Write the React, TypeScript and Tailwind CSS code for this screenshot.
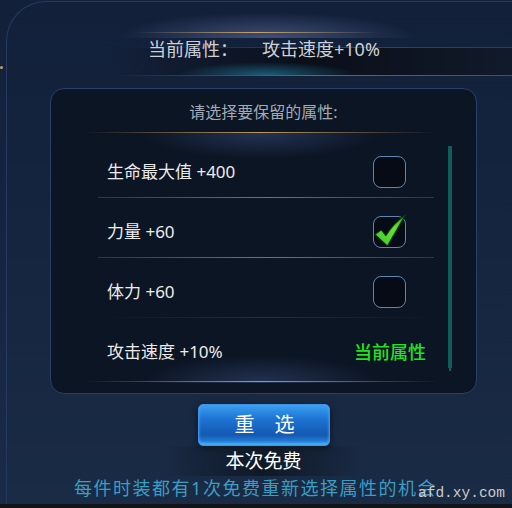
import React from 'react';

const rows = [
  { label: '生命最大值 +400', state: 'empty', line: 'gold' },
  { label: '力量 +60', state: 'checked', line: 'gold' },
  { label: '体力 +60', state: 'empty', line: 'grey' },
  { label: '攻击速度 +10%', state: 'current', line: 'none' },
];

const CheckBox: React.FC<{ checked?: boolean }> = ({ checked }) => (
  <div className="relative w-[33px] h-[32px] rounded-[8px] border-[1.5px] border-[#5d87b0] bg-[#060b15]">
    {checked && (
      <svg className="absolute -left-[1px] -top-[3px]" width="35" height="35" viewBox="0 0 34 34">
        <defs>
          <linearGradient id="chk" x1="0" y1="1" x2="1" y2="0">
            <stop offset="0" stopColor="#3fc52a" />
            <stop offset="0.6" stopColor="#66e034" />
            <stop offset="1" stopColor="#1fa81a" />
          </linearGradient>
        </defs>
        <path
          d="M2 20 L8 15.5 L12.5 21 Q20 9 31.5 1 Q25 12 14 31 Z"
          fill="url(#chk)"
          stroke="#0c3a0c"
          strokeWidth="1"
          strokeLinejoin="round"
        />
      </svg>
    )}
  </div>
);

export default function App() {
  return (
    <div className="relative w-[512px] h-[508px] overflow-hidden flex flex-col bg-gradient-to-b from-[#12203a] to-[#1a2b45] font-['Noto_Sans','Noto_Sans_CJK_SC',sans-serif]">
      {/* 左侧金色小点 */}
      <div className="absolute left-0 top-[66px] w-[3px] h-[3px] rounded-full bg-[#c9a062]" />

      {/* 外框 */}
      <div className="flex-1 ml-[6px] mt-[1px] border-l border-t border-[#243a60] rounded-tl-[40px] flex flex-col">
        {/* 顶部当前属性 */}
        <div className="relative h-[86px]">
          <div className="absolute left-[110px] top-[10px] w-[300px] h-[26px] bg-[radial-gradient(ellipse_at_center_bottom,rgba(120,135,195,0.45),transparent_70%)]" />
          <div className="absolute left-[128px] top-[30px] w-[244px] h-px bg-gradient-to-r from-transparent via-[#c9a365] to-transparent" />
          <div className="absolute left-[100px] right-0 top-[45px] h-[28px] bg-gradient-to-r from-transparent via-[#0a0f19] to-[#111a2a]" />
          <div className="absolute left-[110px] right-0 top-[45px] h-px bg-gradient-to-r from-transparent via-[#4a4232] to-[#3a3a3a]" />
          <div className="absolute left-[170px] top-[60px] w-[180px] h-[13px] bg-[radial-gradient(ellipse_at_center_bottom,rgba(40,150,190,0.55),transparent_70%)]" />
          <div className="absolute left-[108px] right-0 top-[73px] h-px bg-gradient-to-r from-transparent via-[#7a6442] to-[#5a4a36]" />
          <div className="relative flex pt-[35px] pl-[141px] text-[18px] leading-[24px] text-[#cdd1d7]">
            <span className="w-[114px]">当前属性：</span>
            <span>攻击速度+10%</span>
          </div>
        </div>

        {/* 主体列 */}
        <div className="ml-[43px] w-[427px] flex flex-col items-center">
          <div className="relative w-[427px] h-[306px] rounded-[14px] border border-[#2a4068] bg-[#0c1524] flex flex-col">
            <div className="absolute left-[90px] top-[44px] w-[240px] h-[26px] bg-[radial-gradient(ellipse_at_center_top,rgba(50,70,115,0.6),transparent_70%)]" />
            <div className="absolute left-[90px] top-[266px] w-[240px] h-[28px] bg-[radial-gradient(ellipse_at_center_bottom,rgba(50,70,115,0.6),transparent_70%)]" />

            <div className="relative self-center pt-[12px] text-[16px] leading-[22px] text-[#a3abb7]">
              请选择要保留的属性:
            </div>
            <div className="relative ml-[33px] mt-[9px] w-[351px] h-px bg-gradient-to-r from-transparent via-[#c09a5e] to-transparent" />

            <div className="relative ml-[47px] mt-[5px] w-[336px] flex flex-col">
              {rows.map((r) => (
                <div key={r.label} className="relative h-[60px] flex items-center pt-[8px] pl-[9px] pr-[28px]">
                  <span className="flex-1 text-[17px] text-[#ececec]">{r.label}</span>
                  {r.state === 'empty' && <CheckBox />}
                  {r.state === 'checked' && <CheckBox checked />}
                  {r.state === 'current' && (
                    <span className="-mr-[20px] text-[18px] font-medium text-[#1fe41f]">当前属性</span>
                  )}
                  {r.line === 'gold' && (
                    <div className="absolute left-0 right-0 bottom-0 h-px bg-gradient-to-r from-[#3a3328] via-[#8a7048] to-[#3a3328]" />
                  )}
                  {r.line === 'grey' && (
                    <div className="absolute left-0 right-0 bottom-0 h-px bg-gradient-to-r from-transparent via-[#233041] to-transparent" />
                  )}
                </div>
              ))}
            </div>

            <div className="relative ml-[31px] mt-[3px] w-[358px] h-px bg-gradient-to-r from-transparent via-[#b8965c] to-transparent" />

            {/* 滚动条 */}
            <div className="absolute left-[397px] top-[57px] w-[4px] h-[222px] bg-[#0f5e59]" />
            <div className="absolute left-[398px] top-[279px] w-[2px] h-[3px] bg-[#0f5e59]" />
          </div>

          <button className="mt-[10px] w-[132px] h-[42px] rounded-[5px] border border-[#3f93e6] bg-[linear-gradient(to_bottom,#3a9ff2_0%,#1d74d4_35%,#1459b2_75%,#2c8fea_100%)] shadow-[0_2px_6px_rgba(0,0,0,0.6),inset_0_-2px_3px_rgba(80,200,255,0.7)] flex items-center justify-center gap-[20px] pl-[2px] text-[20px] leading-[26px] text-white">
            <span>重</span>
            <span>选</span>
          </button>

          <div className="px-[60px] h-[30px] flex items-center bg-gradient-to-r from-transparent via-[#0f1927] to-transparent text-[19px] text-white">
            本次免费
          </div>

          <div className="mr-[16px] text-[18px] leading-[24px] tracking-[1.5px] text-[#3c9dc3]">
            每件时装都有1次免费重新选择属性的机会
          </div>
        </div>
      </div>

      <div className="h-[4px] bg-[#121518]" />

      <div className="absolute right-[7px] bottom-[6px] text-[14.5px] leading-[18px] font-['Liberation_Mono',monospace] text-[#cacaca]">
        afd.xy.com
      </div>
    </div>
  );
}
